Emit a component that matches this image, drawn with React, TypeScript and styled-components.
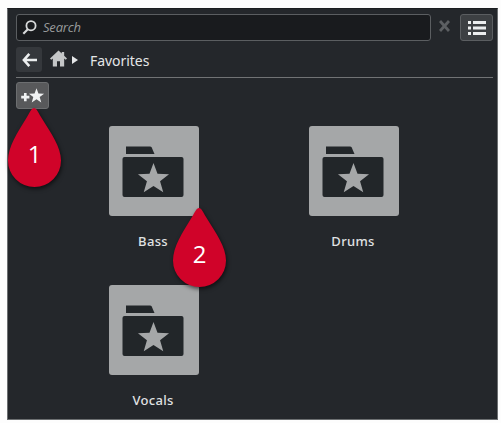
import styled, { createGlobalStyle } from "styled-components";

const GlobalStyle = createGlobalStyle`
  * {
    box-sizing: border-box;
  }
  body {
    margin: 0;
    background: #fdfdfd;
    font-family: "Noto Sans", "Open Sans", sans-serif;
  }
`;

const Page = styled.div`
  padding: 8px 3px 3px 7px;
  height: 423px;
  overflow: hidden;
`;

const Panel = styled.main`
  position: relative;
  height: 412px;
  padding: 5px 4px 0 8px;
  background: #24272b;
  border: 1px solid #6c6f71;
  border-top-color: #1b1d20;
`;

const Toolbar = styled.div`
  display: flex;
  align-items: center;
  height: 27px;
`;

const SearchField = styled.label`
  display: flex;
  align-items: center;
  gap: 6px;
  width: 415px;
  height: 27px;
  padding: 0 0 1px 5px;
  background: #191b1e;
  border: 1px solid #5b5e61;
  border-radius: 3px;
`;

const SearchInput = styled.input`
  flex: 1;
  min-width: 0;
  padding: 0;
  border: 0;
  outline: 0;
  background: transparent;
  color: #ddd;
  font: italic 13px "Open Sans", sans-serif;
  letter-spacing: -0.2px;
  &::placeholder {
    color: #989a9b;
    opacity: 1;
  }
`;

const IconButton = styled.button<{ $w: number; $h: number; $bg?: string; $line?: string }>`
  display: flex;
  align-items: center;
  justify-content: center;
  flex: none;
  width: ${(p) => p.$w}px;
  height: ${(p) => p.$h}px;
  padding: 0;
  background: ${(p) => p.$bg ?? "transparent"};
  border: 1px solid ${(p) => p.$line ?? "transparent"};
  border-radius: 3px;
`;

const ClearButton = styled(IconButton)`
  padding: 0 3px 3px 0;
`;

const Breadcrumb = styled.nav`
  display: flex;
  align-items: center;
  height: 37px;
  border-bottom: 1px solid #717375;
  padding-top: 1px;
`;

const HomeIcon = styled.svg`
  margin: 0 0 2px 8px;
`;

const ArrowIcon = styled.svg`
  margin-left: 5px;
`;

const Crumb = styled.span`
  margin-left: 12px;
  padding-top: 2px;
  color: #e4e6e7;
  font-size: 14px;
  letter-spacing: -0.05px;
  line-height: 18px;
`;

const Actions = styled.div`
  padding-top: 4px;
  height: 48px;
`;

const Grid = styled.div`
  display: grid;
  grid-template-columns: 200px 200px;
  grid-auto-rows: 159px;
  padding-left: 38px;
`;

const Item = styled.div`
  display: flex;
  flex-direction: column;
  align-items: center;
`;

const Tile = styled.div`
  width: 90px;
  height: 90px;
  background: #a5a7a8;
  border-radius: 3px;
`;

const Name = styled.span`
  margin-top: 16px;
  padding-right: 2px;
  color: #e0e2e3;
  font-size: 13px;
  font-weight: 500;
  letter-spacing: 0.3px;
  line-height: 18px;
`;

const Marker = styled.div<{ $x: number; $y: number }>`
  position: absolute;
  left: ${(p) => p.$x}px;
  top: ${(p) => p.$y}px;
  width: 53px;
  height: 79px;
  padding-top: 32px;
  color: #fff;
  font: 500 24px/28px "Open Sans", sans-serif;
  text-align: center;
`;

const Drop = styled.svg`
  position: absolute;
  left: 0;
  top: 0;
  overflow: visible;
  filter: drop-shadow(1px 2px 2px rgba(0, 0, 0, 0.6));
`;

const MarkerText = styled.span`
  position: relative;
`;

const STAR = "M0-10 2.5-3.3 9.7-3 4.1 1.4 6.1 8.3 0 4.3-6.1 8.3-4.1 1.4-9.7-3-2.5-3.3Z";

const folders = ["Bass", "Drums", "Vocals"];

const markers = [
  { label: "1", x: 0, y: 99 },
  { label: "2", x: 165, y: 199 },
];

function FolderIcon() {
  return (
    <svg width="90" height="90" viewBox="0 0 90 90">
      <path d="M17 20.5h24q1.2 0 1.7 1l2.8 6.5H17Z" fill="#222629" />
      <rect x="13.5" y="31" width="61" height="40" rx="2" fill="#222629" />
      <path d={STAR} transform="translate(44.5 53) scale(1.6)" fill="#a5a7a8" />
    </svg>
  );
}

export default function App() {
  return (
    <Page>
      <GlobalStyle />
      <Panel>
        <Toolbar>
          <SearchField>
            <svg width="15" height="15" viewBox="0 0 15 15" fill="none" stroke="#d8dadb">
              <circle cx="9" cy="5.7" r="4.6" strokeWidth="1.8" />
              <path d="m5.8 9.2-4.5 4.6" strokeWidth="2.1" />
            </svg>
            <SearchInput placeholder="Search" />
          </SearchField>
          <ClearButton $w={29} $h={27} aria-label="Clear">
            <svg width="11" height="12" viewBox="0 0 11 12" stroke="#5c5f62" strokeWidth="2.8">
              <path d="m1 1 9 10M10 1 1 11" />
            </svg>
          </ClearButton>
          <IconButton $w={33} $h={27} $bg="#3d4043" $line="#5b5e61" aria-label="List view">
            <svg width="18" height="14" viewBox="0 0 18 14" fill="#eceeef">
              <path d="M0 0h3v3H0zM5 0H18v3H5zM0 5.5h3v3H0zM5 5.5H18v3H5zM0 11h3v3H0zM5 11H18v3H5z" />
            </svg>
          </IconButton>
        </Toolbar>
        <Breadcrumb>
          <IconButton $w={26} $h={25} $bg="#35383c" aria-label="Back">
            <svg width="15" height="14" viewBox="0 0 15 14" fill="none" stroke="#eceeef" strokeWidth="2.6">
              <path d="M7.3.9 1.9 7l5.4 6.1M2 7h13" />
            </svg>
          </IconButton>
          <HomeIcon width="17" height="17" viewBox="0 0 18 17" fill="#c4c6c7">
            <path d="M9 0 0 8.5l1.3 1.3L3 8.4V17h4.4v-5.5h3.2V17H15V8.4l1.7 1.4L18 8.5l-3-2.9V1.5h-2.6v1.7Z" />
          </HomeIcon>
          <ArrowIcon width="6" height="8" viewBox="0 0 6 8" fill="#e4e6e7">
            <path d="m0 0 6 4-6 4Z" />
          </ArrowIcon>
          <Crumb>Favorites</Crumb>
        </Breadcrumb>
        <Actions>
          <IconButton $w={33} $h={27} $bg="#58595b" $line="#6c6e70" aria-label="Add favorite">
            <svg width="25" height="18" viewBox="0 0 25 18" fill="#f0f2f3">
              <path d="M4 6h2.6v2.8h2.8v2.6H6.6v2.8H4v-2.8H1.2V8.8H4Z" />
              <path d={STAR} transform="translate(16.5 9) scale(.78)" />
            </svg>
          </IconButton>
        </Actions>
        <Grid>
          {folders.map((name) => (
            <Item key={name}>
              <Tile>
                <FolderIcon />
              </Tile>
              <Name>{name}</Name>
            </Item>
          ))}
        </Grid>
        {markers.map((m) => (
          <Marker key={m.label} $x={m.x} $y={m.y}>
            <Drop width="53" height="79" viewBox="0 0 53 79">
              <path
                d="M26 0C28.5 0 30 4 33 9C43 25 53 39 53 52.5A26.5 26.5 0 0 1 0 52.5C0 39 9 25 19 9C22 4 23.5 0 26 0Z"
                fill="#d00329"
              />
            </Drop>
            <MarkerText>{m.label}</MarkerText>
          </Marker>
        ))}
      </Panel>
    </Page>
  );
}
